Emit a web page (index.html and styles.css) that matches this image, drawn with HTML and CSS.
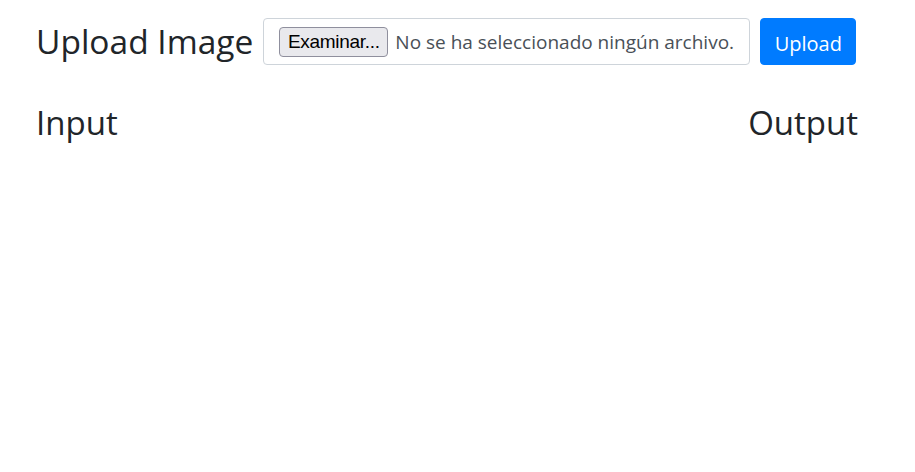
FILE: index.html
```html
<!DOCTYPE html>
<html lang="es">
<head>
<meta charset="utf-8">
<title>Upload Image</title>
<link rel="stylesheet" href="styles.css">
</head>
<body>
<div class="container">
  <form class="upload-row">
    <h2 class="title">Upload Image</h2>
    <label class="file-control">
      <span class="file-btn">Examinar...</span>
      <span class="file-text">No se ha seleccionado ningún archivo.</span>
    </label>
    <button type="button" class="btn-upload">Upload</button>
  </form>
  <div class="io-row">
    <h2 class="io-title">Input</h2>
    <h2 class="io-title">Output</h2>
  </div>
</div>
</body>
</html>
```
FILE: styles.css
```css
html, body {
  margin: 0;
  padding: 0;
  background: #fff;
}
body {
  font-family: "Open Sans", "Noto Sans", sans-serif;
  color: #212529;
}
.container {
  width: 822px;
  padding: 18px 0 0 36px;
}
.upload-row {
  display: flex;
  align-items: center;
  margin: 0;
}
.title {
  margin: 0 10px 0 0;
  font-size: 33.5px;
  font-weight: 400;
  line-height: 1.2;
  white-space: nowrap;
}
.file-control {
  display: flex;
  align-items: center;
  box-sizing: border-box;
  width: 487px;
  height: 47px;
  padding: 0 8px 0 15px;
  border: 1px solid #ced4da;
  border-radius: 4px;
  background: #fff;
}
.file-btn {
  box-sizing: border-box;
  height: 30px;
  width: 109px;
  display: flex;
  align-items: center;
  justify-content: center;
  border: 1px solid #8f8f9d;
  border-radius: 4px;
  background: #e9e9ed;
  color: #000;
  font-size: 19px;
  font-family: "Liberation Sans", Arial, sans-serif;
  letter-spacing: -0.3px;
}
.file-text {
  margin-left: 7px;
  font-size: 19px;
  color: #495057;
  white-space: nowrap;
}
.btn-upload {
  margin-left: 10px;
  box-sizing: border-box;
  width: 96px;
  height: 47px;
  border: 1px solid #007bff;
  border-radius: 4px;
  background: #007bff;
  color: #fff;
  font-family: inherit;
  font-size: 20px;
  padding: 3px 0 0;
}
.io-row {
  display: flex;
  justify-content: space-between;
  margin-top: 38px;
}
.io-title {
  margin: 0;
  font-size: 33px;
  font-weight: 400;
  line-height: 1.2;
}
```
